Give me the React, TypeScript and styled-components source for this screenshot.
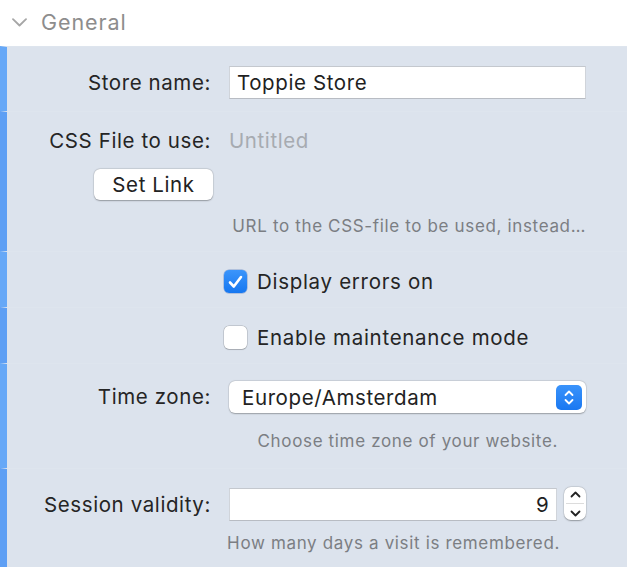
import React from "react";
import styled, { createGlobalStyle } from "styled-components";

const Global = createGlobalStyle`
  html, body { margin: 0; padding: 0; background: #dce3ed; }
  body { font-family: Inter, "Noto Sans", Roboto, sans-serif; -webkit-font-smoothing: antialiased; }
  * { box-sizing: border-box; }
`;

const Page = styled.div`
  width: 627px;
  height: 567px;
  overflow: hidden;
  background: #dce3ed;
`;

const Header = styled.div`
  height: 46px;
  background: #ffffff;
  display: flex;
  align-items: center;
  padding-left: 12px;
  gap: 14px;
  color: #8d8d8d;
  font-size: 21.5px;
  letter-spacing: 0.9px;
  padding-bottom: 2px;
`;

const Row = styled.div<{ $h: number; $dark?: boolean; $pt: number }>`
  height: ${(p) => p.$h}px;
  border-left: 7px solid ${(p) => (p.$dark ? "#5e9ff4" : "#66a8f7")};
  border-top: 1px solid rgba(255, 255, 255, 0.07);
  padding-top: ${(p) => p.$pt}px;
  display: grid;
  grid-template-columns: 204px 357px;
  column-gap: 18px;
  align-content: start;
  font-size: 20.5px;
  letter-spacing: 0.6px;
  color: #252525;
`;

const Label = styled.div<{ $h?: number }>`
  grid-column: 1;
  text-align: right;
  height: ${(p) => p.$h ?? 33}px;
  line-height: ${(p) => p.$h ?? 33}px;
  white-space: nowrap;
`;

const Control = styled.div`
  grid-column: 2;
  display: flex;
  align-items: center;
  min-width: 0;
`;

const TextInput = styled.div<{ $right?: boolean; $w?: number }>`
  height: 33px;
  width: ${(p) => (p.$w ? `${p.$w}px` : "100%")};
  background: #fff;
  border: 1px solid #d0d4da;
  border-top-color: #c4c8ce;
  border-bottom-color: #b8bcc3;
  color: #1f1f1f;
  display: flex;
  align-items: center;
  justify-content: ${(p) => (p.$right ? "flex-end" : "flex-start")};
  padding: 1px 7px 0;
  line-height: 1;
`;

const Placeholder = styled.div`
  color: #a7abb1;
  height: 30px;
  line-height: 30px;
`;

const ButtonCell = styled.div`
  grid-column: 1;
  display: flex;
  justify-content: flex-end;
  padding-top: 13px;
  margin-right: -2px;
`;

const PushButton = styled.div`
  width: 119px;
  height: 31px;
  background: #fff;
  border-radius: 6px;
  box-shadow: 0 0.5px 1.5px rgba(0, 0, 0, 0.3), 0 0 0 0.5px rgba(0, 0, 0, 0.08);
  color: #222;
  display: flex;
  align-items: center;
  justify-content: center;
`;

const Help = styled.div<{ $mt: number; $pr?: number }>`
  grid-column: 1 / 3;
  text-align: right;
  padding-right: ${(p) => p.$pr ?? 0}px;
  margin-top: ${(p) => p.$mt}px;
  font-size: 17px;
  letter-spacing: 0.65px;
  color: #7b7e83;
  white-space: nowrap;
`;

const CheckRow = styled.label`
  grid-column: 2;
  display: flex;
  align-items: center;
  gap: 10px;
  margin-left: -5px;
  color: #252525;
  height: 23px;
  letter-spacing: 0.7px;
`;

const Box = styled.span<{ $on?: boolean }>`
  width: 23px;
  height: 23px;
  border-radius: 5px;
  flex: none;
  display: flex;
  align-items: center;
  justify-content: center;
  background: ${(p) => (p.$on ? "linear-gradient(#3b95fb, #1677f0)" : "#fff")};
  box-shadow: ${(p) =>
    p.$on
      ? "0 0 0 0.5px rgba(0,60,160,0.4)"
      : "0 0 0 0.5px rgba(0,0,0,0.22), 0 0.5px 1px rgba(0,0,0,0.15)"};
`;

const Select = styled.div`
  width: 357px;
  height: 32px;
  background: #fff;
  border-radius: 6px;
  box-shadow: 0 0.5px 1.5px rgba(0, 0, 0, 0.28), 0 0 0 0.5px rgba(0, 0, 0, 0.08);
  display: flex;
  align-items: center;
  justify-content: space-between;
  padding: 0 4px 0 13px;
  color: #222;
`;

const BlueStep = styled.span`
  width: 26px;
  height: 25px;
  border-radius: 5px;
  background: linear-gradient(#3a93fb, #1a78f1);
  display: flex;
  align-items: center;
  justify-content: center;
`;

const Stepper = styled.span`
  width: 22px;
  height: 33px;
  margin-left: 7px;
  margin-top: -2px;
  border-radius: 7px;
  background: #fff;
  box-shadow: 0 0.5px 1.5px rgba(0, 0, 0, 0.3), 0 0 0 0.5px rgba(0, 0, 0, 0.08);
  display: flex;
  flex-direction: column;
  align-items: center;
  justify-content: space-between;
  padding: 4px 0 3px;
  position: relative;
`;

const StepDivider = styled.span`
  position: absolute;
  left: 2px;
  right: 2px;
  top: 16px;
  height: 1px;
  background: #dcdcdc;
`;

const Chevron = () => (
  <svg width="15" height="9" viewBox="0 0 15 9">
    <path d="M1 1.2 L7.5 7.5 L14 1.2" fill="none" stroke="#a6a6a6" strokeWidth="1.8" strokeLinecap="round" strokeLinejoin="round" />
  </svg>
);

const Check = () => (
  <svg width="15" height="14" viewBox="0 0 15 14">
    <path d="M2 7.5 L5.8 11.5 L13 2" fill="none" stroke="#fff" strokeWidth="2.6" strokeLinecap="round" strokeLinejoin="round" />
  </svg>
);

const UpDown = ({ color }: { color: string }) => (
  <svg width="10" height="17" viewBox="0 0 10 17">
    <path d="M1.5 6 L5 2.5 L8.5 6" fill="none" stroke={color} strokeWidth="1.8" strokeLinecap="round" strokeLinejoin="round" />
    <path d="M1.5 11 L5 14.5 L8.5 11" fill="none" stroke={color} strokeWidth="1.8" strokeLinecap="round" strokeLinejoin="round" />
  </svg>
);

const Caret = ({ up }: { up?: boolean }) => (
  <svg width="11" height="7" viewBox="0 0 11 7">
    <path d={up ? "M1.5 5.5 L5.5 1.5 L9.5 5.5" : "M1.5 1.5 L5.5 5.5 L9.5 1.5"} fill="none" stroke="#222" strokeWidth="1.8" strokeLinecap="round" strokeLinejoin="round" />
  </svg>
);

export default function App() {
  return (
    <Page>
      <Global />
      <Header>
        <Chevron />
        <span>General</span>
      </Header>

      <Row $h={65} $pt={19}>
        <Label>Store name:</Label>
        <Control>
          <TextInput>Toppie Store</TextInput>
        </Control>
      </Row>

      <Row $h={140} $pt={14} $dark>
        <Label $h={30}>CSS File to use:</Label>
        <Control>
          <Placeholder>Untitled</Placeholder>
        </Control>
        <ButtonCell>
          <PushButton>Set Link</PushButton>
        </ButtonCell>
        <Help $mt={16}>URL to the CSS-file to be used, instead…</Help>
      </Row>

      <Row $h={56} $pt={18}>
        <CheckRow>
          <Box $on>
            <Check />
          </Box>
          Display errors on
        </CheckRow>
      </Row>

      <Row $h={56} $pt={18} $dark>
        <CheckRow>
          <Box />
          Enable maintenance mode
        </CheckRow>
      </Row>

      <Row $h={105} $pt={17}>
        <Label $h={32}>Time zone:</Label>
        <Control>
          <Select>
            Europe/Amsterdam
            <BlueStep>
              <UpDown color="#fff" />
            </BlueStep>
          </Select>
        </Control>
        <Help $mt={18} $pr={28}>Choose time zone of your website.</Help>
      </Row>

      <Row $h={100} $pt={19} $dark>
        <Label>Session validity:</Label>
        <Control>
          <TextInput $right $w={331}>9</TextInput>
          <Stepper>
            <Caret up />
            <StepDivider />
            <Caret />
          </Stepper>
        </Control>
        <Help $mt={12} $pr={26}>How many days a visit is remembered.</Help>
      </Row>
    </Page>
  );
}
